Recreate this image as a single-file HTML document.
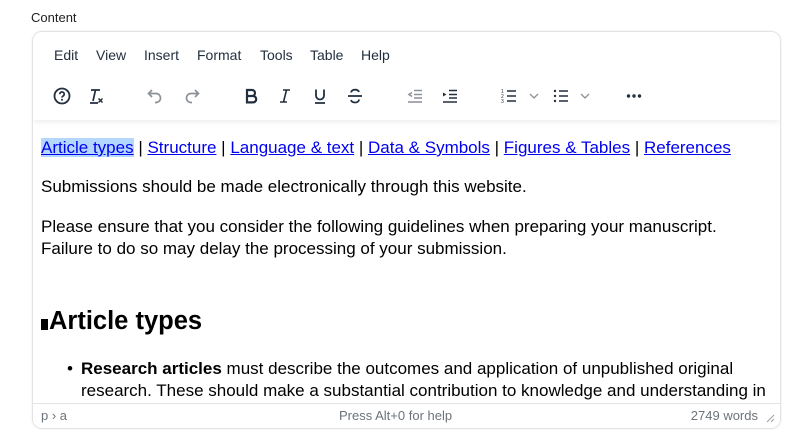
<!DOCTYPE html>
<html><head><style>
*{box-sizing:border-box;margin:0;padding:0}
body{width:809px;height:435px;background:#fff;font-family:"Liberation Sans",sans-serif;color:#222f3e;position:relative;overflow:hidden}
.lbl{position:absolute;left:31px;top:10px;font-size:13px;color:#222}
.ed{position:absolute;left:32px;top:31px;width:749px;height:398px;border:1px solid #e3e3e3;border-radius:10px;overflow:hidden;box-shadow:0 0 2px rgba(0,0,0,.08)}
.hdr{position:absolute;left:0;top:0;width:100%;height:88px;background:#fff;box-shadow:0 3px 5px -1px rgba(0,0,0,.08);z-index:2}
.menu{position:absolute;top:15px;left:0;font-size:14px;color:#222f3e}
.menu span{position:absolute;white-space:nowrap}
.tb svg{position:absolute;top:54px;width:20px;height:20px}
.cont{position:absolute;left:8px;top:88px;width:732px;font-size:17px;color:#000;line-height:22px}
.cont a{color:#00e;text-decoration:underline}
.cont p{position:absolute;left:0;white-space:nowrap}
.sb{position:absolute;left:0;bottom:0;width:100%;height:25px;border-top:1px solid #e3e3e3;background:#fff;font-size:13px;color:#6d737b}
</style></head><body>
<div class="lbl">Content</div>
<div class="ed">
<div class="hdr">
<div class="menu"><span style="left:21px">Edit</span><span style="left:63px">View</span><span style="left:111px">Insert</span><span style="left:164px">Format</span><span style="left:227px">Tools</span><span style="left:277px">Table</span><span style="left:328px">Help</span></div>
<div class="tb">
<svg style="left:19px" viewBox="0 0 20 20"><circle cx="10" cy="10" r="7.5" fill="none" stroke="#222f3e" stroke-width="1.8"/><path d="M7.8 8.2a2.2 2.2 0 1 1 3 2c-.6.3-.8.7-.8 1.4" fill="none" stroke="#222f3e" stroke-width="1.7"/><circle cx="10" cy="13.8" r="1" fill="#222f3e"/></svg>
<svg style="left:53px" viewBox="0 0 20 20"><path d="M5 4h9M9.5 4l-2.5 11M4 17h8" stroke="#222f3e" stroke-width="1.7" fill="none"/><path d="M12.5 12.5l4 4M16.5 12.5l-4 4" stroke="#222f3e" stroke-width="1.5"/></svg>
<svg style="left:112px" viewBox="0 0 20 20"><path d="M7 4L3.5 7.5 7 11M4 7.5h7a4.5 4.5 0 0 1 0 9h-1" fill="none" stroke="#8c9198" stroke-width="1.7"/></svg>
<svg style="left:149px" viewBox="0 0 20 20"><path d="M13 4l3.5 3.5L13 11M16 7.5H9a4.5 4.5 0 0 0 0 9h1" fill="none" stroke="#8c9198" stroke-width="1.7"/></svg>
<svg style="left:208px" viewBox="0 0 20 20"><path d="M6 4h5a3 3 0 0 1 0 6H6zM6 10h6a3.2 3.2 0 0 1 0 6.4H6z" fill="none" stroke="#222f3e" stroke-width="2.2"/></svg>
<svg style="left:242px" viewBox="0 0 20 20"><path d="M8 4h7M5 16h7M11.5 4L8.5 16" stroke="#222f3e" stroke-width="1.6" fill="none"/></svg>
<svg style="left:277px" viewBox="0 0 20 20"><path d="M6 3.5v6a4 4 0 0 0 8 0v-6M5 17h10" stroke="#222f3e" stroke-width="1.8" fill="none"/></svg>
<svg style="left:312px" viewBox="0 0 20 20"><path d="M14 6c-.5-1.5-2-2.3-4-2.3-2.3 0-3.8 1.2-3.8 2.8M6 14c.5 1.6 2 2.5 4 2.5 2.4 0 4-1.2 4-3M3 10h14" stroke="#222f3e" stroke-width="1.8" fill="none"/></svg>
<svg style="left:372px" viewBox="0 0 20 20"><path d="M9 4.5h8M9 8.5h8M9 12h8M3 16h14M7 6.5l-3 2 3 2" stroke="#8c9198" stroke-width="1.6" fill="none"/></svg>
<svg style="left:407px" viewBox="0 0 20 20"><path d="M9 4.5h8M9 8.5h8M9 12h8M3 16h14" stroke="#222f3e" stroke-width="1.6" fill="none"/><path d="M3 6.5l3.5 2-3.5 2z" fill="#222f3e"/></svg>
<svg style="left:466px" viewBox="0 0 20 20"><path d="M8 5h9M8 10h9M8 15h9" stroke="#222f3e" stroke-width="1.6"/><text x="2" y="7" font-size="5" fill="#222f3e">1</text><text x="2" y="12" font-size="5" fill="#222f3e">2</text><text x="2" y="17" font-size="5" fill="#222f3e">3</text></svg>
<svg style="left:491px" viewBox="0 0 20 20"><path d="M6 8l4 4 4-4" stroke="#8c9198" stroke-width="1.3" fill="none"/></svg>
<svg style="left:518px" viewBox="0 0 20 20"><path d="M8 5h9M8 10h9M8 15h9" stroke="#222f3e" stroke-width="1.6"/><circle cx="4" cy="5" r="1.2" fill="#222f3e"/><circle cx="4" cy="10" r="1.2" fill="#222f3e"/><circle cx="4" cy="15" r="1.2" fill="#222f3e"/></svg>
<svg style="left:542px" viewBox="0 0 20 20"><path d="M6 8l4 4 4-4" stroke="#8c9198" stroke-width="1.3" fill="none"/></svg>
<svg style="left:591px" viewBox="0 0 20 20"><circle cx="4.5" cy="10" r="1.7" fill="#222f3e"/><circle cx="10" cy="10" r="1.7" fill="#222f3e"/><circle cx="15.5" cy="10" r="1.7" fill="#222f3e"/></svg>
</div>
</div>
<div class="cont">
<p style="top:17px"><a style="background:#b4d7ff">Article types</a> | <a>Structure</a> | <a>Language &amp; text</a> | <a>Data &amp; Symbols</a> | <a>Figures &amp; Tables</a> | <a>References</a></p>
<p style="top:56px">Submissions should be made electronically through this website.</p>
<p style="top:96px">Please ensure that you consider the following guidelines when preparing your manuscript.</p>
<p style="top:118px">Failure to do so may delay the processing of your submission.</p>
<p style="top:186px;font-size:25.5px;font-weight:bold;line-height:30px"><span style="display:inline-block;width:7px;height:11px;background:#000;vertical-align:-1px;margin-right:1px"></span>Article types</p>
<p style="top:238px;left:26px">•</p>
<p style="top:238px;left:40px"><b>Research articles</b> must describe the outcomes and application of unpublished original</p>
<p style="top:260px;left:40px">research. These should make a substantial contribution to knowledge and understanding in</p>
</div>
<div class="sb"><span style="position:absolute;left:8px;top:4px">p › a</span><span style="position:absolute;left:306px;top:4px">Press Alt+0 for help</span><span style="position:absolute;right:22px;top:4px">2749 words</span><svg style="position:absolute;right:5px;top:9px" width="10" height="10"><path d="M9 2L2 9M9 6L6 9" stroke="#9aa0a6" stroke-width="1"/></svg></div>
</div>
</body></html>
